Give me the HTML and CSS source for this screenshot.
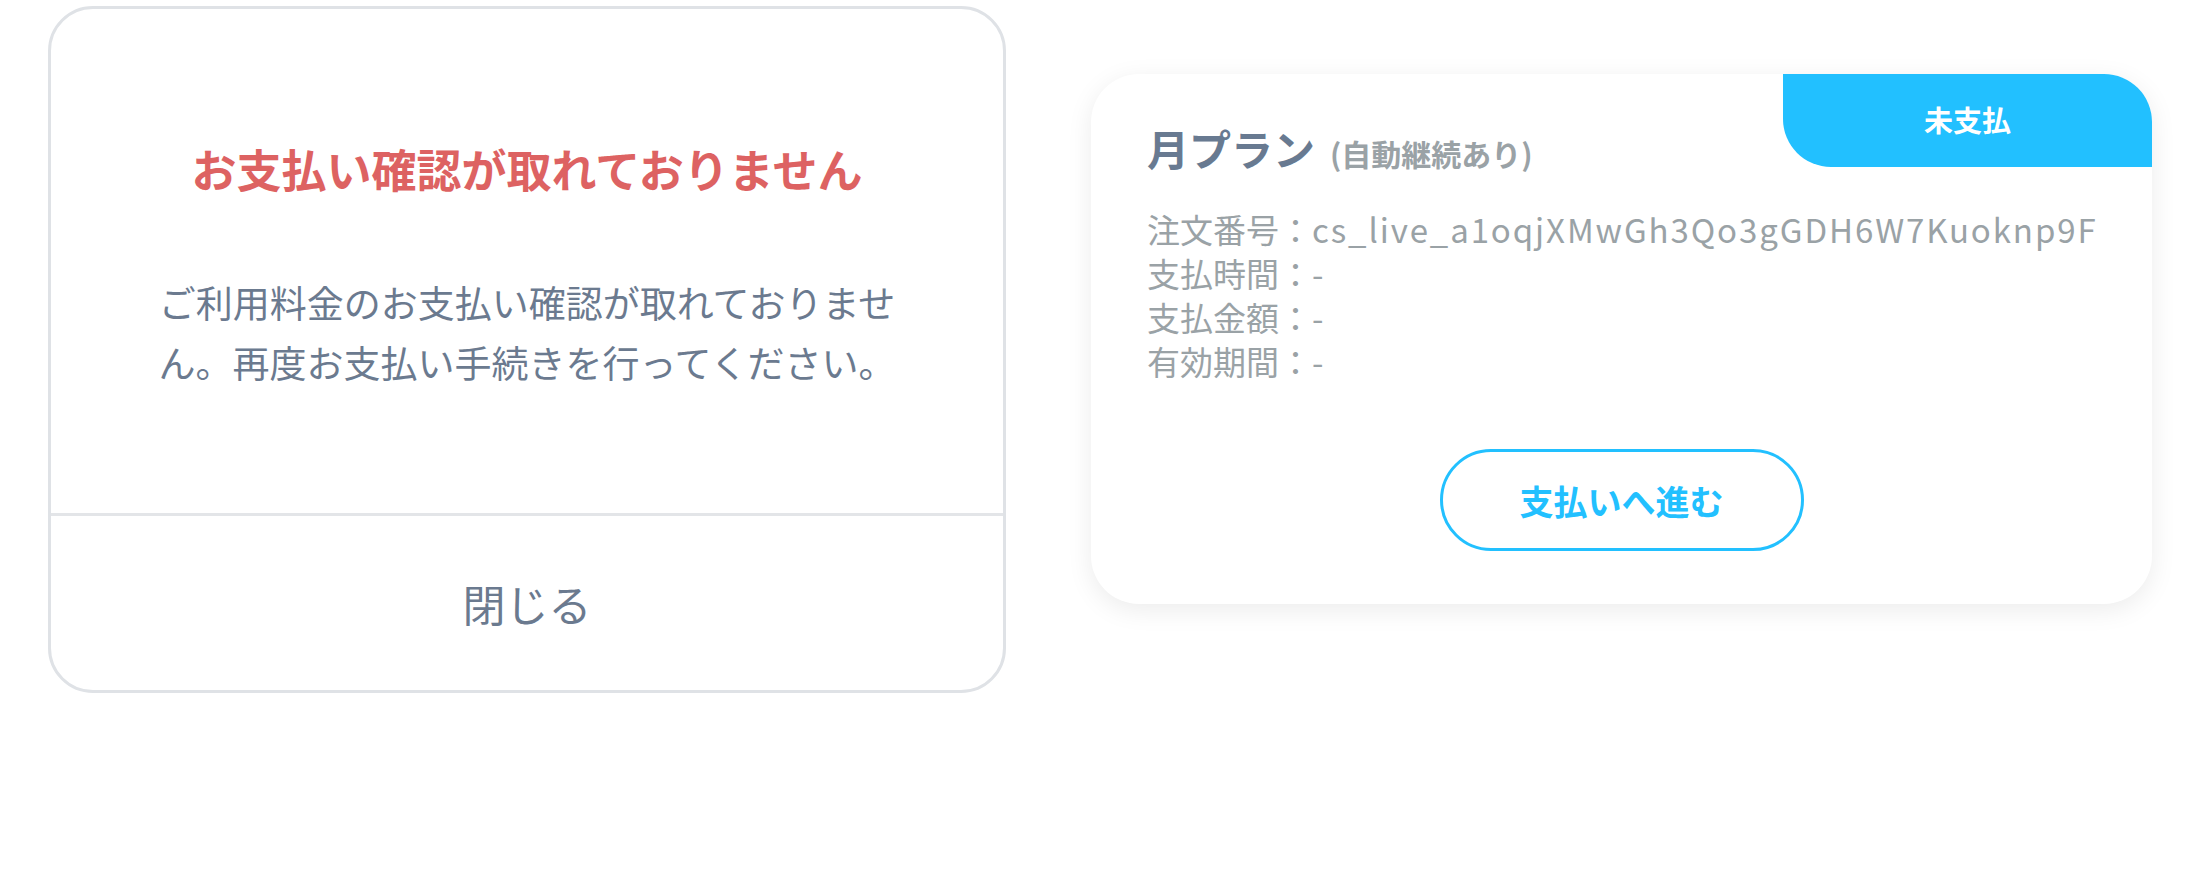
FILE: index.html
```html
<!DOCTYPE html>
<html lang="ja">
<head>
	<meta charset="UTF-8">
	<title>お支払い確認</title>
	<link rel="stylesheet" href="styles.css">
</head>
<body>
	<div class="page">
		<div class="dialog">
			<div class="dialog_body">
				<h2 class="dialog_title">お支払い確認が取れておりません</h2>
				<p class="dialog_text">ご利用料金のお支払い確認が取れておりません。再度お支払い手続きを行ってください。</p>
			</div>
			<div class="dialog_footer">閉じる</div>
		</div>

		<div class="plan">
			<span class="badge">未支払</span>
			<div class="plan_title">月プラン<small>(自動継続あり)</small></div>
			<ul class="plan_info">
				<li>注文番号：<span class="code">cs_live_a1oqjXMwGh3Qo3gGDH6W7Kuoknp9FzR2sLx</span></li>
				<li>支払時間：-</li>
				<li>支払金額：-</li>
				<li>有効期間：-</li>
			</ul>
			<div class="plan_action">
				<a class="pay_btn" href="#">支払いへ進む</a>
			</div>
		</div>
	</div>
</body>
</html>
```

FILE: styles.css
```css
*{
	margin: 0;
	padding: 0;
	list-style: none;
	box-sizing: border-box;
}
body{
	background-color: #fff;
	font-family: "Noto Sans CJK JP", "Noto Sans", sans-serif;
}
.page{
	display: flex;
	align-items: flex-start;
	gap: 85px;
	padding: 6px 0 0 48px;
}

/* 左：確認ダイアログ */
.dialog{
	width: 958px;
	border: 3px solid #dfe2e6;
	border-radius: 45px;
	background-color: #fff;
	overflow: hidden;
}
.dialog_body{
	padding: 128px 0 121px;
	border-bottom: 3px solid #e3e5e8;
	text-align: center;
}
.dialog_title{
	font-size: 45px;
	line-height: 64px;
	font-weight: bold;
	color: #dd6262;
}
.dialog_text{
	width: 752px;
	margin: 71px auto 0;
	font-size: 37px;
	line-height: 60px;
	color: #6b7a8f;
}
.dialog_footer{
	height: 174px;
	display: flex;
	align-items: center;
	justify-content: center;
	font-size: 43px;
	color: #6b7a8f;
	cursor: pointer;
}

/* 右：プランカード */
.plan{
	position: relative;
	width: 1061px;
	margin-top: 68px;
	padding: 46px 56px 53px;
	background-color: #fff;
	border-radius: 48px;
	box-shadow: 0 6px 26px rgba(0, 0, 0, 0.08);
	overflow: hidden;
}
.badge{
	position: absolute;
	top: 0;
	right: 0;
	width: 369px;
	height: 93px;
	padding-bottom: 3px;
	display: flex;
	align-items: center;
	justify-content: center;
	background-color: #22c0ff;
	border-bottom-left-radius: 48px;
	color: #fff;
	font-size: 29px;
	font-weight: bold;
}
.plan_title{
	font-size: 42px;
	line-height: 56px;
	font-weight: bold;
	color: #687a91;
}
.plan_title small{
	margin-left: 15px;
	font-size: 30px;
	color: #9aa2a6;
}
/* 注文番号が長い時は右端で切る */
.plan_info{
	margin-top: 20px;
	padding: 6px 0;
	font-size: 33px;
	line-height: 44px;
	color: #9aa2a6;
	white-space: nowrap;
	overflow: hidden;
}
.plan_info .code{
	letter-spacing: 1.9px;
}
.plan_action{
	display: flex;
	justify-content: center;
	margin-top: 60px;
}
.pay_btn{
	width: 364px;
	height: 102px;
	display: flex;
	align-items: center;
	justify-content: center;
	border: 3px solid #22c0ff;
	border-radius: 51px;
	color: #22c0ff;
	font-size: 34px;
	font-weight: bold;
	text-decoration: none;
}
```
